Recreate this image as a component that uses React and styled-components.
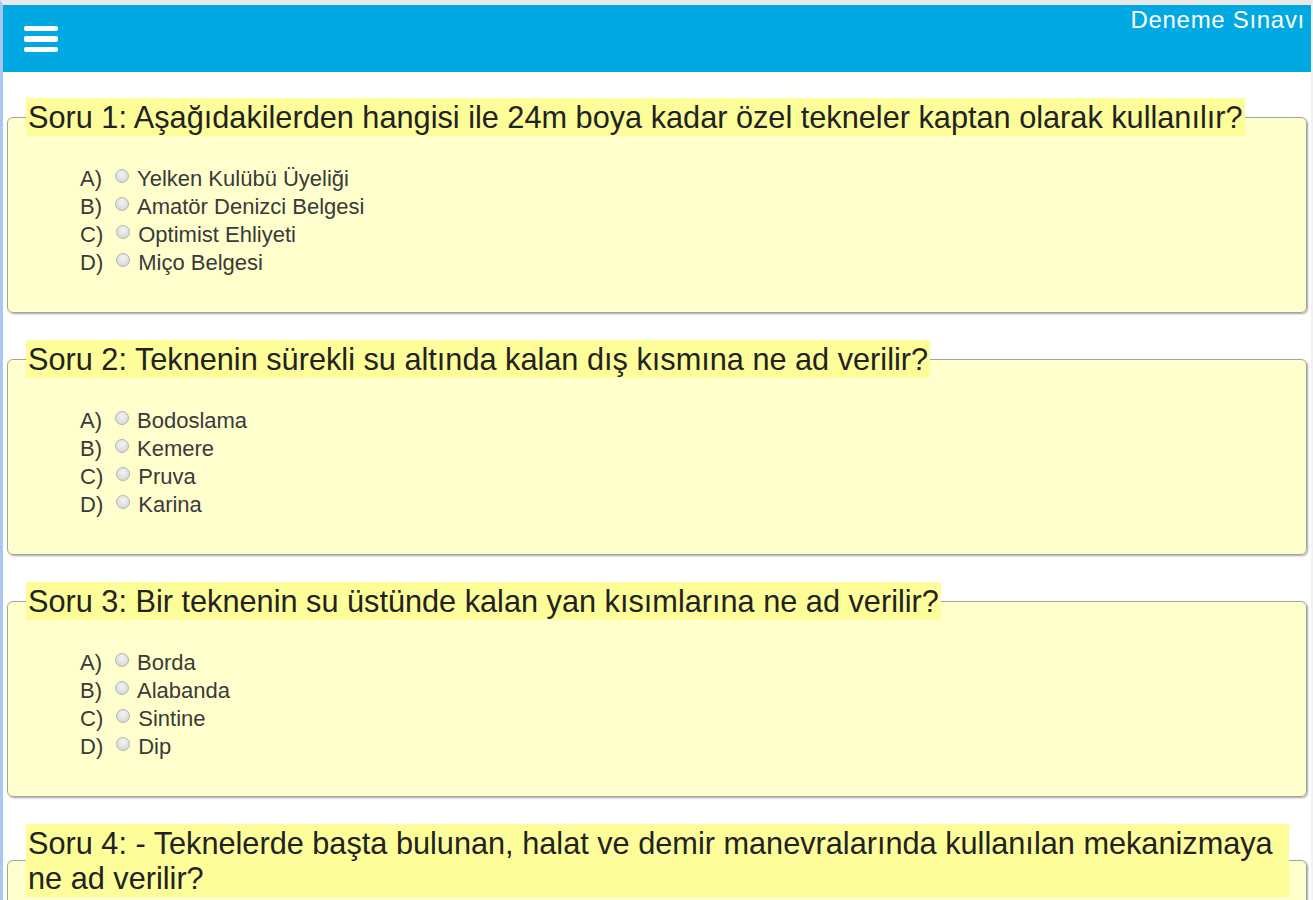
import React from "react";
import styled, { createGlobalStyle } from "styled-components";

const GlobalStyle = createGlobalStyle`
  html, body {
    margin: 0;
    padding: 0;
    background: #ffffff;
    font-family: "Liberation Sans", Arial, sans-serif;
  }
`;

const Frame = styled.div`
  min-height: 100vh;
  box-sizing: border-box;
  border-left: 3px solid #a9c8f0;
  border-top: 5px solid #e9e9ea;
  border-right: 2px solid #f1f1f1;
  overflow: hidden;
`;

const Header = styled.header`
  height: 67px;
  background: #00a9e1;
  display: flex;
  justify-content: space-between;
  align-items: flex-start;
  padding: 0 6px 0 21px;
`;

const Burger = styled.button`
  align-self: center;
  display: flex;
  flex-direction: column;
  gap: 5px;
  background: none;
  border: none;
  padding: 0;
  margin-top: 1px;
  cursor: pointer;

  span {
    display: block;
    width: 34px;
    height: 5.5px;
    border-radius: 2px;
    background: #ffffff;
  }
`;

const Title = styled.div`
  color: #ffffff;
  font-size: 24px;
  letter-spacing: 0.7px;
  margin-top: 1px;
`;

const Questions = styled.main`
  display: flex;
  flex-direction: column;
  gap: 27px;
  padding: 26px 4px 0 4px;
`;

const Fieldset = styled.fieldset`
  margin: 0;
  padding: 0 17px 35px 18px;
  border: 1px solid #a4a4a4;
  border-radius: 6px;
  background: #ffffcd;
  box-shadow: 1px 1px 2px rgba(90, 90, 90, 0.55);
`;

const Legend = styled.legend`
  padding: 2px 2px 1px;
  background: #fdfd99;
  color: #222222;
  font-size: 30.7px;
  line-height: 35px;
`;

const Options = styled.div`
  margin: 29px 0 0 54px;
  display: flex;
  flex-direction: column;
`;

const Option = styled.label`
  font-size: 22px;
  line-height: 28px;
  color: #3a3a3a;
  cursor: pointer;
`;

const Letter = styled.span`
  margin-right: 13px;
`;

const Radio = styled.input`
  appearance: none;
  width: 14px;
  height: 14px;
  margin: 0 8px 0 0;
  border: 1px solid #b4b4b4;
  border-radius: 50%;
  background: radial-gradient(circle at 50% 35%, #f4f4f4, #d0d0d0);
  vertical-align: 3px;
  box-sizing: border-box;

  &:checked {
    background: radial-gradient(circle, #3c7ad0 35%, #e8e8e8 40%);
  }
`;

const questions = [
  {
    id: 1,
    text: "Soru 1: Aşağıdakilerden hangisi ile 24m boya kadar özel tekneler kaptan olarak kullanılır?",
    answers: ["Yelken Kulübü Üyeliği", "Amatör Denizci Belgesi", "Optimist Ehliyeti", "Miço Belgesi"],
  },
  {
    id: 2,
    text: "Soru 2: Teknenin sürekli su altında kalan dış kısmına ne ad verilir?",
    answers: ["Bodoslama", "Kemere", "Pruva", "Karina"],
  },
  {
    id: 3,
    text: "Soru 3: Bir teknenin su üstünde kalan yan kısımlarına ne ad verilir?",
    answers: ["Borda", "Alabanda", "Sintine", "Dip"],
  },
  {
    id: 4,
    text: "Soru 4: - Teknelerde başta bulunan, halat ve demir manevralarında kullanılan mekanizmaya ne ad verilir?",
    answers: ["Irgat", "Baba", "Kurtağzı", "Loça"],
  },
];

const letters = ["A)", "B)", "C)", "D)"];

const Question = ({ q }) => (
  <Fieldset>
    <Legend>{q.text}</Legend>
    <Options>
      {q.answers.map((a, i) => (
        <Option key={a}>
          <Letter>{letters[i]}</Letter>
          <Radio type="radio" name={`soru${q.id}`} value={i} />
          {a}
        </Option>
      ))}
    </Options>
  </Fieldset>
);

export default function App() {
  return (
    <>
      <GlobalStyle />
      <Frame>
        <Header>
          <Burger aria-label="Menü">
            <span />
            <span />
            <span />
          </Burger>
          <Title>Deneme Sınavı</Title>
        </Header>
        <Questions>
          {questions.map((q) => (
            <Question key={q.id} q={q} />
          ))}
        </Questions>
      </Frame>
    </>
  );
}
